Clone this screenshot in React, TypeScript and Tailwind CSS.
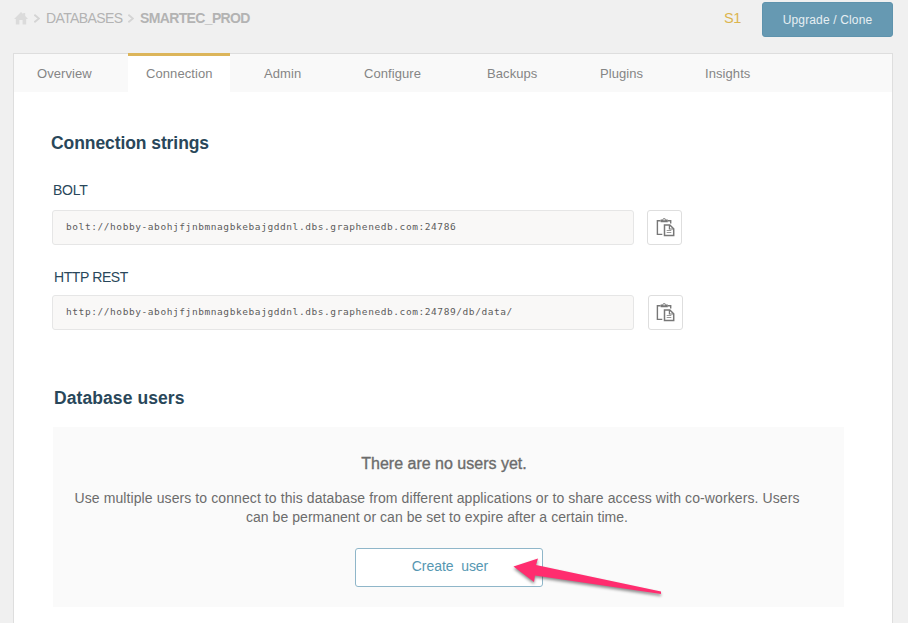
import React from "react";

const tabs = [
  { label: "Overview", box: "w-[114px] pl-[23px]" },
  { label: "Connection", box: "w-[102px] pl-[18px]", active: true },
  { label: "Admin", box: "w-[100px] pl-[34px]" },
  { label: "Configure", box: "w-[123px] pl-[34px]" },
  { label: "Backups", box: "w-[113px] pl-[34px]" },
  { label: "Plugins", box: "w-[105px] pl-[34px]" },
  { label: "Insights", box: "w-[105px] pl-[34px]" },
];

function HomeIcon() {
  return (
    <svg width="14" height="13" viewBox="0 0 14 13" fill="#dbdbdb" className="shrink-0">
      <path d="M7 0 9.2 2.1V.9h2v3.2L14 7h-1.8v5.6H8.6V8H5.4v4.6H1.8V7H0Z" />
    </svg>
  );
}

function Chevron() {
  return (
    <svg width="6" height="9" viewBox="0 0 6 9" fill="none" stroke="#d4d4d4" strokeWidth="1.8" className="shrink-0">
      <path d="m.4.8 4.6 3.7-4.6 3.7" />
    </svg>
  );
}

function PasteIcon() {
  return (
    <svg width="19" height="19" viewBox="0 0 19 19" fill="none" stroke="#777" className="shrink-0">
      <path d="M6.3 16.4H1.4V2.8h3.2M11.8 2.8h2.9v2.6" strokeWidth="1.4" />
      <path d="M4.6 1.5h2C6.8.6 7.4.3 8.2.3s1.4.3 1.6 1.2h2v2.7H4.6Z" fill="#777" stroke="none" />
      <path d="M7.2 1.8h2" stroke="#fff" strokeWidth="0.9" />
      <path d="M8.5 6.9h5.3l3.9 3.9v6.7H8.5Z" strokeWidth="1.5" fill="#fff" />
      <path d="M13.4 7v4h4" strokeWidth="1.2" />
      <path d="M10.7 12.5h4.6M10.7 14.5h4.6" strokeWidth="1" stroke="#999" />
    </svg>
  );
}

function CopyField({ value, gap, iconPad }: { value: string; gap: string; iconPad: string }) {
  return (
    <div className={`flex ${gap}`}>
      <div className="flex h-[35px] w-[582px] items-center rounded-[3px] border border-[#e6e6e6] bg-[#f9f8f7] pl-[13px] font-['DejaVu_Sans_Mono',monospace] text-[9.5px] tracking-[0.575px] text-[#5c5c5c]">
        <span className="whitespace-nowrap">{value}</span>
      </div>
      <button className={`flex h-[35px] w-[35px] items-center justify-center rounded-[3px] border border-[#dedede] bg-white ${iconPad}`}>
        <PasteIcon />
      </button>
    </div>
  );
}

export default function App() {
  return (
    <div className="h-[623px] w-[908px] overflow-hidden bg-[#f0f0f0] font-['Liberation_Sans',Arial,sans-serif]">
      <header className="flex h-[53px] items-start pl-[14px] text-[14px] leading-[16px] text-[#b3b3b3]">
        <div className="flex h-[36px] w-[710px] items-center">
          <HomeIcon />
          <span className="ml-[6px]"><Chevron /></span>
          <span className="ml-[6px] w-[77px] whitespace-nowrap tracking-[-0.6px]">DATABASES</span>
          <span className="ml-[5px]"><Chevron /></span>
          <span className="ml-[6px] whitespace-nowrap font-bold tracking-[-0.64px]">SMARTEC_PROD</span>
        </div>
        <span className="mt-[10px] w-[38px] text-[14.5px] tracking-[-0.4px] text-[#dcb54f]">S1</span>
        <button className="mt-[2px] h-[35px] w-[131px] rounded-[3px] border border-[#5e93ad] bg-[#6699b2] text-[12px] tracking-[0.15px] text-[#e6eff3]">
          Upgrade / Clone
        </button>
      </header>

      <main className="ml-[13px] h-[570px] w-[880px] border border-b-0 border-[#dedede] bg-white">
        <nav className="flex h-[38px] bg-[#f9f9f9] text-[13px] leading-[40px] tracking-[0.08px] text-[#858585]">
          {tabs.map((t) => (
            <div
              key={t.label}
              className={`${t.box} ${t.active ? "-mt-px h-[39px] border-t-[3px] border-[#dcb55a] bg-white leading-[36px]" : ""}`}
            >
              {t.label}
            </div>
          ))}
        </nav>

        <section className="pl-[38px] text-[#29475a]">
          <h2 className="-ml-px mt-[40px] text-[17.5px] font-bold leading-[22px] tracking-[-0.08px]">Connection strings</h2>
          <h3 className="ml-px mt-[27px] text-[14px] leading-[18px] tracking-[-0.25px]">BOLT</h3>
          <div className="mt-[11px]">
            <CopyField gap="gap-[13px]" iconPad="pl-px" value="bolt://hobby-abohjfjnbmnagbkebajgddnl.dbs.graphenedb.com:24786" />
          </div>
          <h3 className="ml-[2px] mt-[23px] text-[14px] leading-[18px] tracking-[-0.4px]">HTTP REST</h3>
          <div className="mt-[9px]">
            <CopyField gap="gap-[14px]" iconPad="pr-px" value="http://hobby-abohjfjnbmnagbkebajgddnl.dbs.graphenedb.com:24789/db/data/" />
          </div>
        </section>

        <section className="pl-[39px]">
          <h2 className="ml-[1px] mt-[57px] text-[17.5px] font-bold leading-[22px] tracking-[0.08px] text-[#29475a]">Database users</h2>
          <div className="mt-[18px] h-[180px] w-[791px] bg-[#fafafa] pt-[27px] text-[#6c6c6c]">
            <p className="w-[782px] text-center text-[16px] leading-[20px] [-webkit-text-stroke:0.35px_#6c6c6c]">There are no users yet.</p>
            <p className="mt-[15px] w-[768px] whitespace-nowrap text-center text-[14px] leading-[19px]">
              <span className="tracking-[0.094px]">
                Use multiple users to connect to this database from different applications or to share access with co-workers. Users
              </span>
              <br />
              <span className="tracking-[0.05px]">can be permanent or can be set to expire after a certain time.</span>
            </p>
            <div className="relative ml-[302px] mt-[21px] h-[39px] w-[188px]">
              <button className="h-full w-full whitespace-pre rounded-[3px] border border-[#8fb6c9] bg-white pb-[2px] pl-[2px] text-[14px] tracking-[-0.05px] text-[#5697b2]">
                {"Create  user"}
              </button>
              <svg
                className="pointer-events-none absolute left-[150px] top-[5px] drop-shadow-[0_2px_1.5px_rgba(0,0,0,0.45)]"
                width="165"
                height="50"
                viewBox="0 0 165 50"
              >
                <path d="M8.5 13.5 33 5.5 31 12 156 38.5V41L30 22.5 29 29Z" fill="#ff2d6f" />
              </svg>
            </div>
          </div>
        </section>
      </main>
    </div>
  );
}
